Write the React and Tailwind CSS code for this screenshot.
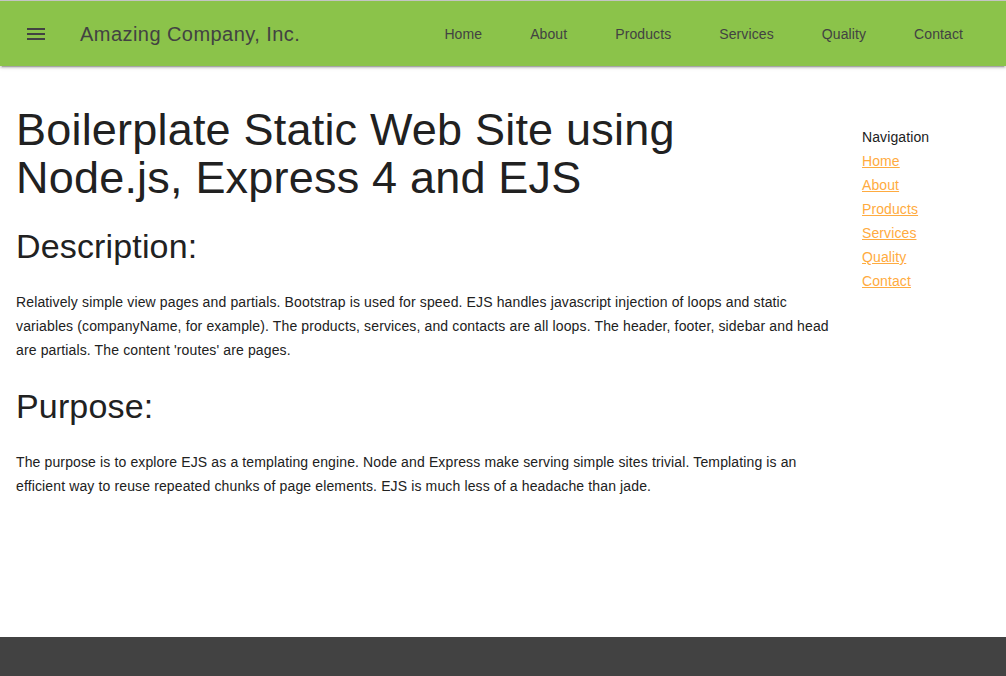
const navLinks = ["Home", "About", "Products", "Services", "Quality", "Contact"];

const Header = () => (
  <header className="relative z-10 border-t border-[#c4c4c4] bg-[#8bc34a] text-[#424242] shadow-[0_2px_2px_0_rgba(0,0,0,0.14),0_3px_1px_-2px_rgba(0,0,0,0.2),0_1px_5px_0_rgba(0,0,0,0.12)]">
    <div className="flex h-[65px] items-center pr-[19px]">
      <button className="ml-6 flex h-6 w-6 items-center justify-center">
        <svg width="24" height="24" viewBox="0 0 24 24" fill="#424242">
          <path d="M3 6h18v2H3zM3 11h18v2H3zM3 16h18v2H3z" />
        </svg>
      </button>
      <span className="ml-8 text-[20px] tracking-[0.45px]">Amazing Company, Inc.</span>
      <nav className="ml-auto flex">
        {navLinks.map((link) => (
          <a key={link} href="#" className="px-6 pt-[2px] text-[14px] tracking-[0.1px]">
            {link}
          </a>
        ))}
      </nav>
    </div>
  </header>
);

const App = () => {
  return (
    <div className="flex min-h-screen flex-col bg-white font-['Liberation_Sans',Arial,sans-serif] text-[#212121]">
      <Header />

      <div className="flex flex-1">
        <main className="w-[846px] pl-4 pt-[40px]">
          <h1 className="text-[45px] leading-[48px] tracking-[0.2px]">
            Boilerplate Static Web Site using Node.js, Express 4 and EJS
          </h1>
          <h3 className="mt-6 text-[34px] leading-[40px] tracking-[0.15px]">Description:</h3>
          <p className="mt-6 text-[14px] leading-[24px] tracking-[0.13px]">
            Relatively simple view pages and partials. Bootstrap is used for speed. EJS handles
            javascript injection of loops and static variables (companyName, for example). The
            products, services, and contacts are all loops. The header, footer, sidebar and head
            are partials. The content 'routes' are pages.
          </p>
          <h3 className="mt-6 text-[34px] leading-[40px] tracking-[0.15px]">Purpose:</h3>
          <p className="mt-6 text-[14px] leading-[24px] tracking-[0.13px]">
            The purpose is to explore EJS as a templating engine. Node and Express make serving
            simple sites trivial. Templating is an efficient way to reuse repeated chunks of page
            elements. EJS is much less of a headache than jade.
          </p>
        </main>

        <aside className="flex-1 px-4 pt-[59px] text-[14px] leading-[24px] tracking-[0.1px]">
          <div>Navigation</div>
          {navLinks.map((link) => (
            <div key={link}>
              <a href="#" className="text-[#ffab40] underline">
                {link}
              </a>
            </div>
          ))}
        </aside>
      </div>

      <footer className="h-[39px] bg-[#424242]" />
    </div>
  );
};

export default App;
